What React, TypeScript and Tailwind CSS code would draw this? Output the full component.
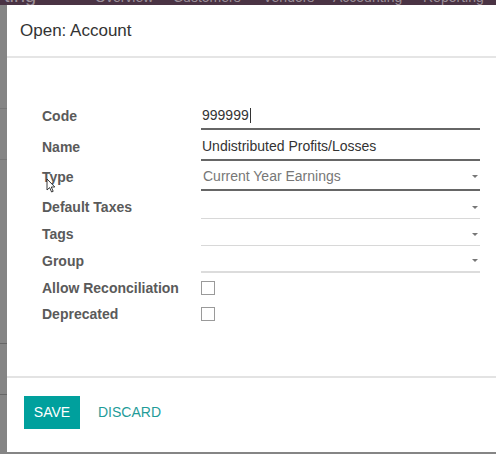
import React from 'react';

const font = { fontFamily: '"Liberation Sans", Arial, sans-serif' };

const Caret: React.FC = () => (
  <span className="ml-auto mr-[2px] h-0 w-0 border-x-[3px] border-t-[3px] border-x-transparent border-t-[#777]" />
);

const Checkbox: React.FC = () => (
  <span className="block h-[14px] w-[14px] border border-[#9a9a9a] bg-white" />
);

const Label: React.FC<{ children: React.ReactNode }> = ({ children }) => (
  <div className="w-[159px] shrink-0 text-[14px] font-bold text-[#5a5a5a]">{children}</div>
);

const App: React.FC = () => {
  return (
    <div className="flex h-[454px] w-[496px] flex-col overflow-hidden bg-[#858585]" style={font}>
      {/* top bar of the page behind the dialog */}
      <div className="flex h-[5px] shrink-0 items-end overflow-hidden whitespace-nowrap bg-[#4a3344] text-[14px] leading-[15px] text-[#9b8f99]">
        <span className="w-[95px] shrink-0 pl-[4px] text-[20px] leading-[20px]">ting</span>
        <span className="w-[78px] shrink-0">Overview</span>
        <span className="w-[90px] shrink-0">Customers</span>
        <span className="w-[70px] shrink-0">Vendors</span>
        <span className="w-[90px] shrink-0">Accounting</span>
        <span className="shrink-0">Reporting</span>
      </div>

      <div className="flex flex-1">
        {/* left strip of the dimmed page */}
        <div className="flex w-[7px] shrink-0 flex-col">
          <div className="h-[103px]" />
          <div className="h-px bg-[#777]" />
          <div className="h-[50px]" />
          <div className="h-px bg-[#777]" />
          <div className="h-[183px]" />
          <div className="h-px bg-[#666]" />
          <div className="h-[50px]" />
          <div className="h-px bg-[#666]" />
        </div>

        {/* dialog */}
        <div className="mb-[2px] flex flex-1 flex-col bg-white">
          <div className="flex h-[53px] items-center border-b-2 border-[#e5e5e5] pl-[13px] text-[17px] text-[#333]">
            Open: Account
          </div>

          <div className="flex flex-col pl-[35px] pr-[16px] pt-[44px]">
            <div className="flex items-center">
              <Label>Code</Label>
              <div className="flex h-[28px] w-[279px] items-center border-b-2 border-[#666] pl-[1px] pt-[1px] text-[14px] text-[#333]">
                999999
                <span className="ml-px h-[15px] w-px bg-[#333]" />
              </div>
            </div>
            <div className="mt-[3px] flex items-center">
              <Label>Name</Label>
              <div className="flex h-[28px] w-[279px] items-center border-b-2 border-[#666] pl-[1px] pt-[1px] text-[14px] text-[#333]">
                Undistributed Profits/Losses
              </div>
            </div>
            <div className="relative mt-[2px] flex items-center">
              <Label>Type</Label>
              <div className="flex h-[28px] w-[279px] items-center border-b-2 border-[#666] pl-[2px] pt-[1px] text-[14px] text-[#777]">
                Current Year Earnings
                <Caret />
              </div>
              {/* mouse pointer */}
              <svg className="absolute left-[4px] top-[15px]" width="10" height="15" viewBox="0 0 10 15">
                <path d="M1 1 L1 12 L3.6 9.6 L5.6 14 L7.2 13.3 L5.3 9 L8.8 9 Z" fill="#fff" stroke="#222" strokeWidth="0.9" />
              </svg>
            </div>
            <div className="mt-[5px] flex items-center">
              <Label>Default Taxes</Label>
              <div className="flex h-[23px] w-[279px] items-center border-b border-[#d8d8d8]">
                <Caret />
              </div>
            </div>
            <div className="mt-[4px] flex items-center">
              <Label>Tags</Label>
              <div className="flex h-[23px] w-[279px] items-center border-b border-[#d8d8d8]">
                <Caret />
              </div>
            </div>
            <div className="mt-[4px] flex items-center">
              <Label>Group</Label>
              <div className="flex h-[23px] w-[279px] items-center border-b-2 border-[#dcdcdc]">
                <Caret />
              </div>
            </div>
            <div className="mt-[3px] flex h-[24px] items-center">
              <Label>Allow Reconciliation</Label>
              <Checkbox />
            </div>
            <div className="mt-[2px] flex h-[24px] items-center">
              <Label>Deprecated</Label>
              <Checkbox />
            </div>
          </div>

          <div className="mt-[50px] flex flex-1 items-start border-t-2 border-[#e3e3e3] pl-[17px] pt-[18px]">
            <button className="h-[33px] w-[56px] bg-[#00a09d] text-[14px] text-white">SAVE</button>
            <button className="ml-[18px] h-[33px] text-[14px] text-[#1f9c99]">DISCARD</button>
          </div>
        </div>
      </div>
    </div>
  );
};

export default App;
